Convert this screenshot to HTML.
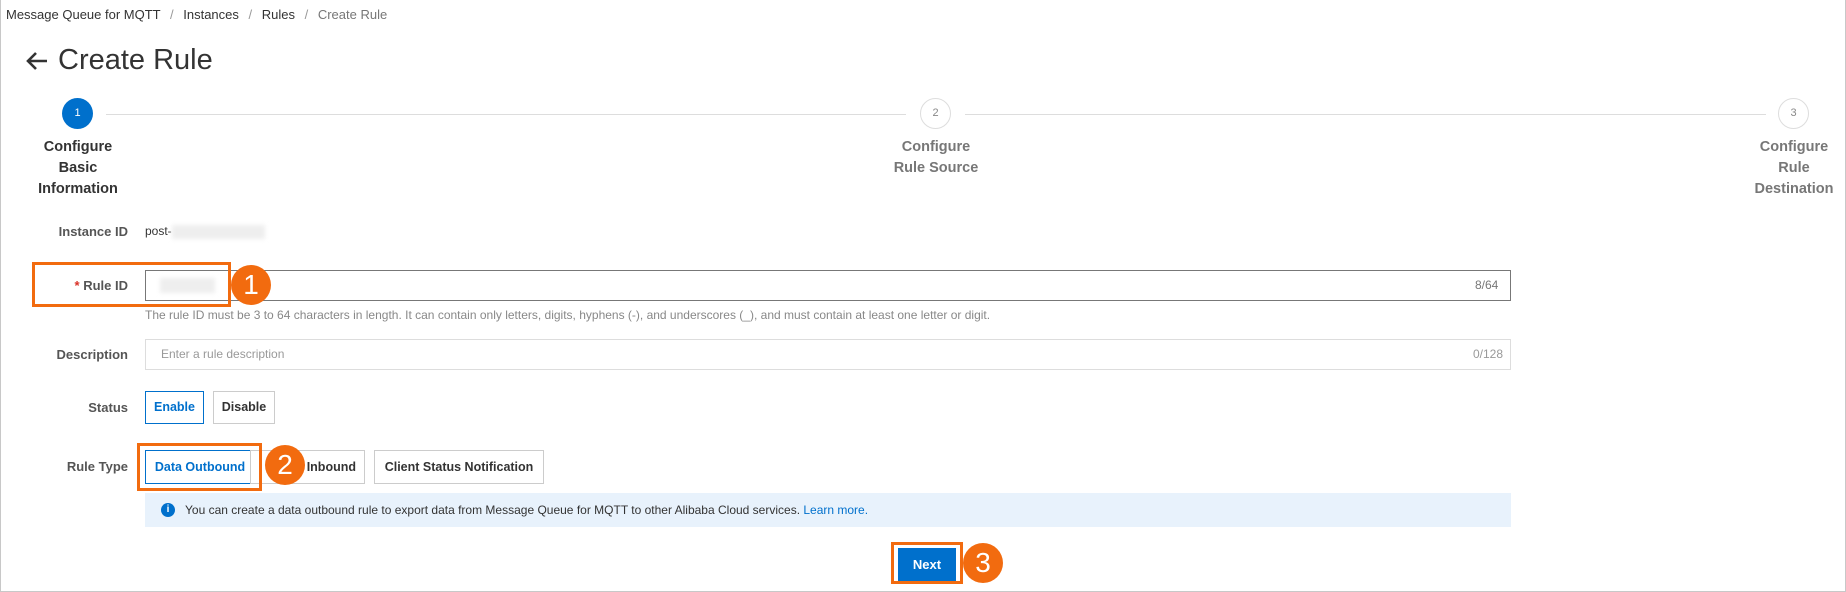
<!DOCTYPE html><html><head><meta charset="utf-8"><style>
*{box-sizing:border-box;margin:0;padding:0}
body{width:1846px;height:592px;background:#fff;font-family:"Liberation Sans",sans-serif;color:#333;position:relative;overflow:hidden}
.frame{position:absolute;left:0;top:0;width:1846px;height:592px;border:1px solid #c8c8c8;border-top:none}
.a{position:absolute;white-space:nowrap}
.lbl{font-size:13px;font-weight:bold;color:#555;text-align:right;width:120px;left:8px}
.circ{position:absolute;width:31px;height:31px;border-radius:50%;font-size:11px;text-align:center;line-height:31px}
.line{position:absolute;height:1px;background:#ddd;top:114px}
.step{position:absolute;font-size:14.5px;font-weight:bold;line-height:21px;text-align:center;width:140px}
.inp{position:absolute;left:145px;width:1366px;border:1px solid #ddd;background:#fff}
.btn{position:absolute;border:1px solid #ccc;background:#fff;font-size:12.5px;font-weight:bold;text-align:center;color:#333}
.orange{position:absolute;border:3px solid #f26b0f}
.num{position:absolute;width:40px;height:40px;border-radius:50%;background:#f26b0f;color:#fff;font-size:28px;text-align:center;line-height:40px}
</style></head><body>
<div class="frame"></div>
<div class="a" style="left:6px;top:7px;font-size:13px;color:#333">Message Queue for MQTT <span style="color:#999;margin:0 6px">/</span> Instances <span style="color:#999;margin:0 6px">/</span> Rules <span style="color:#999;margin:0 6px">/</span> <span style="color:#777">Create Rule</span></div>
<svg class="a" style="left:25px;top:50px" width="24" height="22" viewBox="0 0 24 22"><path d="M22 11H3M11 3L3 11l8 8" stroke="#333" stroke-width="2.6" fill="none"/></svg>
<div class="a" style="left:58px;top:44px;font-size:29px;color:#333">Create Rule</div>

<div class="circ" style="left:62px;top:98px;background:#0070cc;color:#fff">1</div>
<div class="line" style="left:106px;width:800px"></div>
<div class="circ" style="left:920px;top:98px;border:1px solid #ddd;color:#888;line-height:29px">2</div>
<div class="line" style="left:965px;width:801px"></div>
<div class="circ" style="left:1778px;top:98px;border:1px solid #ddd;color:#888;line-height:29px">3</div>
<div class="step" style="left:8px;top:137px;color:#333">Configure<br>Basic<br>Information</div>
<div class="step" style="left:866px;top:137px;color:#777">Configure<br>Rule Source</div>
<div class="step" style="left:1724px;top:137px;color:#777">Configure<br>Rule<br>Destination</div>

<div class="a lbl" style="top:224px">Instance ID</div>
<div class="a" style="left:145px;top:224px;font-size:12px">post-<span style="display:inline-block;width:93px;height:14px;background:#eee;vertical-align:middle;filter:blur(2px)"></span></div>

<div class="a lbl" style="top:278px"><span style="color:#d93026">*</span> Rule ID</div>
<div class="inp" style="top:270px;height:31px;border-color:#777"></div>
<div class="a" style="left:160px;top:278px;width:55px;height:15px;background:#eee;filter:blur(2px)"></div>
<div class="a" style="left:1475px;top:278px;font-size:12px;color:#777">8/64</div>
<div class="orange" style="left:32px;top:262px;width:199px;height:45px"></div>
<div class="num" style="left:231px;top:265px">1</div>
<div class="a" style="left:145px;top:308px;font-size:12px;color:#888">The rule ID must be 3 to 64 characters in length. It can contain only letters, digits, hyphens (-), and underscores (_), and must contain at least one letter or digit.</div>

<div class="a lbl" style="top:347px">Description</div>
<div class="inp" style="top:339px;height:31px"></div>
<div class="a" style="left:161px;top:347px;font-size:12px;color:#999">Enter a rule description</div>
<div class="a" style="left:1473px;top:347px;font-size:12px;color:#999">0/128</div>

<div class="a lbl" style="top:400px">Status</div>
<div class="btn" style="left:145px;top:391px;width:59px;height:33px;line-height:31px;border-color:#0070cc;color:#0070cc">Enable</div>
<div class="btn" style="left:213px;top:391px;width:62px;height:33px;line-height:31px">Disable</div>

<div class="a lbl" style="top:459px">Rule Type</div>
<div class="btn" style="left:145px;top:450px;width:110px;height:34px;line-height:32px;border-color:#0070cc;color:#0070cc">Data Outbound</div>
<div class="btn" style="left:250px;top:450px;width:115px;height:34px;line-height:32px;text-align:right;padding-right:8px">Inbound</div>
<div class="btn" style="left:374px;top:450px;width:170px;height:34px;line-height:32px">Client Status Notification</div>
<div class="orange" style="left:137px;top:443px;width:125px;height:48px"></div>
<div class="num" style="left:265px;top:445px">2</div>

<div class="a" style="left:145px;top:493px;width:1366px;height:34px;background:#e8f2fc"></div>
<div class="a" style="left:161px;top:503px;width:14px;height:14px;border-radius:50%;background:#0070cc;color:#fff;font-size:10px;font-weight:bold;text-align:center;line-height:14px">i</div>
<div class="a" style="left:185px;top:503px;font-size:12px;color:#333">You can create a data outbound rule to export data from Message Queue for MQTT to other Alibaba Cloud services. <span style="color:#0070cc">Learn more.</span></div>

<div class="orange" style="left:891px;top:542px;width:72px;height:42px"></div>
<div class="a" style="left:898px;top:548px;width:58px;height:33px;background:#0070cc;color:#fff;font-size:13px;font-weight:bold;text-align:center;line-height:33px">Next</div>
<div class="num" style="left:963px;top:543px">3</div>
</body></html>
